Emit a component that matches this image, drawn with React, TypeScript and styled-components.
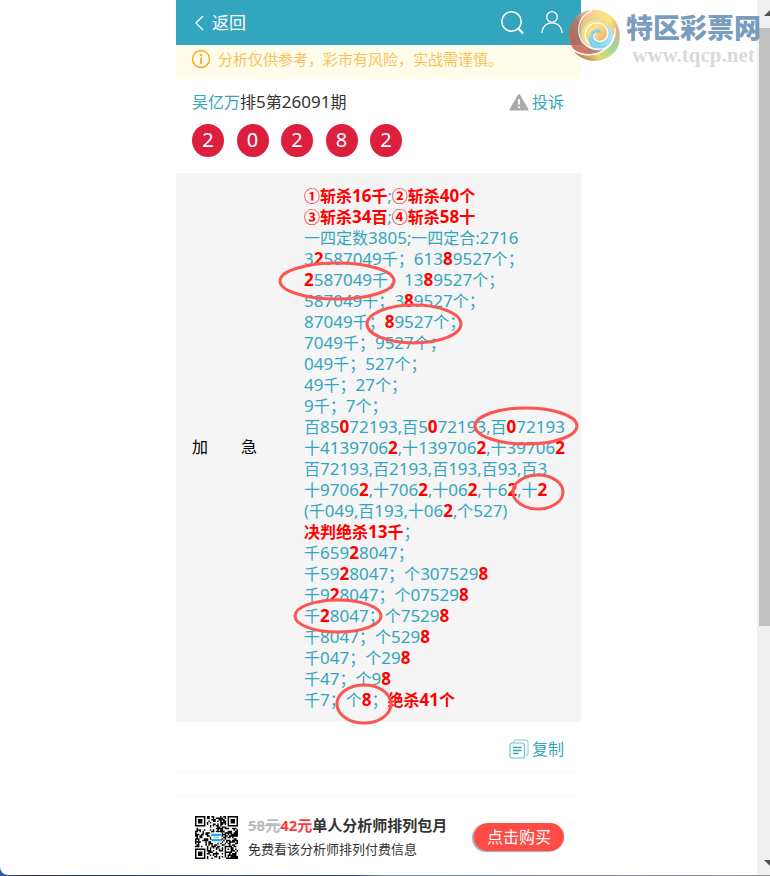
import React from "react";
import styled, { createGlobalStyle, css } from "styled-components";

const teal = "#34a5be";
const sans = `"Noto Sans", "Noto Sans CJK SC", sans-serif`;

const GlobalStyle = createGlobalStyle`
  * { box-sizing: border-box; }
  body { margin: 0; background: #2c5fb0; font-family: ${sans}; color: #333; }
  h1, h2, p { margin: 0; font-weight: 400; }
  a { text-decoration: none; color: inherit; }
  button { font-family: inherit; border: 0; padding: 0; background: none; color: inherit; cursor: pointer; }
  svg { display: block; flex: none; }
`;

const Window = styled.div`
  position: relative;
  display: flex;
  flex-direction: column;
  min-height: 100vh;
  background: linear-gradient(90deg, #2a5bb0 0, #2f2f3c 3%, #2c4a86 24%, #2f5596 30%, #4a3f58 34%, #2c4a86 46%, #7d8790 50%, #8b929a 100%);
`;
const Viewport = styled.div`
  display: flex;
  flex: 1;
  margin-bottom: 1px;
  background: #fff;
  border-bottom-left-radius: 8px;
  overflow: hidden;
`;
const Main = styled.main`
  flex: 1;
  min-width: 0;
`;
const Column = styled.div`
  max-width: 405px;
  margin: 0 auto;
`;

const Header = styled.header`
  display: flex;
  align-items: center;
  justify-content: space-between;
  height: 45px;
  padding: 0 18px;
  background: ${teal};
  color: #fff;
`;
const BackLink = styled.a`
  display: flex;
  align-items: center;
  gap: 8px;
  font-size: 17px;
  line-height: 24px;
`;
const HeaderActions = styled.div`
  display: flex;
  align-items: center;
  gap: 17px;
`;
const Notice = styled.p`
  display: flex;
  gap: 7px;
  height: 34px;
  padding: 4px 15px;
  background: #fffde9;
  border-radius: 0 0 3px 3px;
  color: #f7c15d;
  font-size: 15px;
  line-height: 20px;
  white-space: nowrap;
`;

const Summary = styled.section`
  padding: 11px 17px 16px 16px;
`;
const SummaryTop = styled.div`
  display: flex;
  align-items: center;
  justify-content: space-between;
`;
const Title = styled.h1`
  font-size: 16px;
  line-height: 24px;
`;
const Author = styled.a`
  color: ${teal};
`;
const Numerals = styled.span`
  font-size: 17px;
`;
const IconAction = styled.button`
  display: flex;
  align-items: center;
  gap: 3px;
  color: ${teal};
  font-size: 16px;
  line-height: 24px;
`;
const Balls = styled.div`
  display: flex;
  justify-content: space-between;
  max-width: 210px;
  margin-top: 10px;
`;
const Ball = styled.span`
  width: 32px;
  height: 33px;
  border-radius: 50%;
  background: #dc1f3e;
  color: #fff;
  font-size: 20px;
  line-height: 32px;
  text-align: center;
`;

const Panel = styled.section`
  position: relative;
  display: flex;
  align-items: center;
  padding: 12px 0 12px 16px;
  background: #f5f5f5;
`;
const PanelLabel = styled.h2`
  display: flex;
  justify-content: space-between;
  flex: 0 0 65px;
  margin-right: 47px;
  color: #000;
  font-size: 16px;
  line-height: 21px;
`;
const Line = styled.p`
  height: 21px;
  color: ${teal};
  font-size: 16px;
  line-height: 21px;
  white-space: nowrap;
`;
const Hit = styled.strong`
  color: #f00;
  font-weight: 700;
`;
const Marks = styled.svg`
  position: absolute;
  inset: 0;
  width: 100%;
  height: 100%;
  overflow: visible;
  pointer-events: none;
`;

const CopyRow = styled.div`
  display: flex;
  justify-content: flex-end;
  padding: 15px 17px 10px;
  border-bottom: 1px solid #fafafa;
`;
const Promo = styled.section`
  display: flex;
  align-items: center;
  margin-top: 24px;
  padding: 17px 17px 12px 19px;
  border-top: 1px solid #fafafa;
`;
const PromoText = styled.div`
  flex: 1;
  margin-left: 10px;
  white-space: nowrap;
`;
const PromoTitle = styled.h2`
  color: #333;
  font-size: 15px;
  font-weight: 700;
  line-height: 22px;
`;
const Price = styled.span<{ $old?: boolean }>`
  ${(p) =>
    p.$old
      ? css`
          color: #bbb;
          text-decoration: line-through;
        `
      : css`
          color: #ff3b3b;
        `}
`;
const PromoNote = styled.p`
  margin-top: 2px;
  font-size: 13px;
  line-height: 22px;
`;
const BuyButton = styled.button`
  && {
    height: 28px;
    padding: 0 13px;
    border-radius: 14px;
    background: #ff4c46;
    box-shadow: -2px 1px 1px #aaa;
    color: #fff;
    font-size: 16px;
    line-height: 28px;
  }
`;

const Scrollbar = styled.div`
  display: flex;
  flex-direction: column;
  flex: 0 0 13px;
  padding-left: 2px;
  overflow: hidden;
  background: #f0f0f0;
`;
const ArrowBox = styled.div<{ $end?: boolean }>`
  display: flex;
  align-items: ${(p) => (p.$end ? "center" : "flex-start")};
  justify-content: flex-end;
  height: ${(p) => (p.$end ? "24px" : "28px")};
  padding-top: ${(p) => (p.$end ? "0" : "10px")};
`;
const Thumb = styled.div`
  flex: 598;
  background: #c1c1c1;
`;
const Track = styled.div`
  flex: 225;
`;

const Watermark = styled.div`
  position: absolute;
  top: 9px;
  right: 9px;
  display: flex;
  gap: 6px;
  pointer-events: none;
`;
const WatermarkText = styled.div`
  display: flex;
  flex-direction: column;
  align-items: center;
`;
const WatermarkName = styled.span`
  color: rgba(78, 125, 170, 0.75);
  font-family: "Noto Sans CJK SC", sans-serif;
  font-size: 27px;
  font-weight: 900;
  line-height: 36px;
`;
const WatermarkUrl = styled.span`
  color: rgba(170, 170, 170, 0.45);
  font-family: "Liberation Serif", serif;
  font-size: 21px;
  font-weight: 700;
  line-height: 20px;
`;

/* Prediction lines; text between asterisks is highlighted. */
const lines = [
  "*①斩杀16千*;*②斩杀40个*",
  "*③斩杀34百*;*④斩杀58十*",
  "一四定数3805;一四定合:2716",
  "3*2*587049千；613*8*9527个；",
  "*2*587049千；13*8*9527个；",
  "587049千；3*8*9527个；",
  "87049千；*8*9527个；",
  "7049千；9527个；",
  "049千；527个；",
  "49千；27个；",
  "9千；7个；",
  "百85*0*72193,百5*0*72193,百*0*72193",
  "十4139706*2*,十139706*2*,十39706*2*",
  "百72193,百2193,百193,百93,百3",
  "十9706*2*,十706*2*,十06*2*,十6*2*,十*2*",
  "(千049,百193,十06*2*,个527)",
  "*决判绝杀13千*；",
  "千659*2*8047；",
  "千59*2*8047；个307529*8*",
  "千9*2*8047；个07529*8*",
  "千*2*8047；个7529*8*",
  "千8047；个529*8*",
  "千047；个29*8*",
  "千47；个9*8*",
  "千7；个*8*；*绝杀41个*",
];

const marks = [
  [161, 108, 57, 18],
  [238, 151, 47, 19],
  [350, 253, 51, 18],
  [362, 319, 25, 17],
  [162, 443, 43, 16],
  [188, 531, 27, 19],
];

function Mixed({ text }: { text: string }) {
  return (
    <>
      {text.split(/(\d+)/).map((part, i) => (i % 2 ? <Numerals key={i}>{part}</Numerals> : part))}
    </>
  );
}

function QrCode() {
  const n = 29;
  const cells: string[] = [];
  const finder = (x: number, y: number) => {
    const d = Math.max(Math.abs(x - 3), Math.abs(y - 3));
    return d === 3 || d <= 1;
  };
  let seed = 91;
  for (let y = 0; y < n; y++) {
    for (let x = 0; x < n; x++) {
      seed = (seed * 1103515245 + 12345) % 2147483648;
      let on = (seed >> 12) % 100 < 52;
      if (x < 8 && y < 8) on = x < 7 && y < 7 && finder(x, y);
      else if (x > 20 && y < 8) on = x > 21 && y < 7 && finder(x - 22, y);
      else if (x < 8 && y > 20) on = x < 7 && y > 21 && finder(x, y - 22);
      else if (x > 19 && x < 25 && y > 19 && y < 25) {
        on = Math.max(Math.abs(x - 22), Math.abs(y - 22)) !== 1;
      }
      if (on) cells.push(`M${x} ${y}h1v1h-1z`);
    }
  }
  return (
    <svg width="43" height="43" viewBox="0 0 29 29" role="img" aria-label="二维码">
      <path d={cells.join("")} fill="#000" />
      <rect x="11" y="11" width="7" height="7" fill="#fff" />
      <path d="M11 12h7v1.5h-7z" fill="#2aa7e8" />
      <path d="M12.5 13.8h4l-1 1.2h-3z" fill="#8ed2f5" />
      <path d="M11 15.5h7V17h-7z" fill="#2aa7e8" />
    </svg>
  );
}

function SwirlLogo() {
  return (
    <svg width="52" height="53" viewBox="9 8 156 158" opacity="0.85" aria-hidden="true">
      <defs>
        <linearGradient id="warm" x1="0" y1="0.3" x2="1" y2="0.6">
          <stop offset="0" stopColor="#e58a5c" />
          <stop offset="0.4" stopColor="#f9cf7c" />
          <stop offset="0.7" stopColor="#fbe36a" />
          <stop offset="1" stopColor="#d98a62" />
        </linearGradient>
        <linearGradient id="ember" x1="0.8" y1="0" x2="0.3" y2="1">
          <stop offset="0" stopColor="#fbd9b4" />
          <stop offset="0.45" stopColor="#b9755c" />
          <stop offset="1" stopColor="#c85d4c" />
        </linearGradient>
        <linearGradient id="lagoon" x1="0" y1="0.2" x2="1" y2="0.3">
          <stop offset="0" stopColor="#7fcbd0" />
          <stop offset="0.6" stopColor="#6ec9e6" />
          <stop offset="1" stopColor="#a6e0ee" />
        </linearGradient>
        <linearGradient id="meadow" x1="0" y1="0.8" x2="1" y2="0">
          <stop offset="0" stopColor="#b5563c" />
          <stop offset="0.3" stopColor="#dcd75a" />
          <stop offset="0.6" stopColor="#8fd08c" />
          <stop offset="1" stopColor="#e09a6c" />
        </linearGradient>
        <linearGradient id="core" x1="0" y1="0" x2="1" y2="1">
          <stop offset="0" stopColor="#fff07a" />
          <stop offset="1" stopColor="#f5a04c" />
        </linearGradient>
      </defs>
      <circle cx="88" cy="86" r="76" fill="url(#warm)" />
      <path d="M88 10C42 10 10 44 12 88c1 22 12 42 28 52 26 8 58 4 78-14-38 8-72-12-74-46-2-30 16-56 44-70z" fill="url(#ember)" />
      <path d="M26 132c34 22 76 18 104-8 18-18 24-40 20-62 12 12 16 34 12 50-10 36-50 58-92 49-18-4-34-14-44-29z" fill="url(#meadow)" />
      <path d="M50 92c-6-32 18-58 48-56 32 2 50 28 46 56-6 32-36 46-60 38-18-6-31-20-34-38z" fill="url(#lagoon)" />
      <path d="M50 82c2-26 22-46 48-46 26 1 42 18 46 38-12-18-30-24-48-18-18 5-28 22-26 40 0 14 8 24 16 30-20-4-36-22-36-44z" fill="#f6d774" />
      <path d="M70 84c0-18 14-32 32-30 16 1 26 12 25 26-1 16-15 25-27 21-11-3-14-15-7-21 5-5 13-3 14 3 4-10-5-17-15-14-10 2-18 12-14 25-5-2-8-6-8-10z" fill="url(#core)" />
      <g fill="none" stroke="#fff" strokeWidth="4" strokeLinecap="round">
        <path d="M80 13C52 26 38 50 42 80c4 32 32 50 64 48 22-1 38-18 40-40" />
        <path d="M72 112C54 94 58 66 78 54c22-12 50 0 50 26 0 18-16 28-30 24-12-4-15-16-7-23" />
        <path d="M24 130c34 22 72 18 100-4 18-14 28-36 26-60" />
      </g>
    </svg>
  );
}

export default function App() {
  return (
    <Window>
      <GlobalStyle />
      <Viewport>
        <Main>
          <Column>
            <Header>
              <BackLink href="#back">
                <svg width="10" height="18" viewBox="0 0 10 18" fill="none" stroke="#fff" strokeWidth="1.3">
                  <path d="M9 2 2 9l7 7" />
                </svg>
                返回
              </BackLink>
              <HeaderActions>
                <button aria-label="搜索">
                  <svg width="24" height="24" viewBox="0 0 24 24" fill="none" stroke="#fff" strokeWidth="1.5">
                    <circle cx="11.5" cy="10.5" r="9.7" />
                    <path d="m18.5 17.5 4.5 5" strokeWidth="2" />
                  </svg>
                </button>
                <button aria-label="我的">
                  <svg width="22" height="24" viewBox="0 0 22 24" fill="none" stroke="#fff" strokeWidth="1.2">
                    <circle cx="11" cy="6" r="5.3" />
                    <path d="M1 22c0-6 4.3-10.200 10-10.200S21 16 21 22" />
                  </svg>
                </button>
              </HeaderActions>
            </Header>
            <Notice>
              <svg width="20" height="20" viewBox="0 0 20 20" fill="none" stroke="#ffa11a" strokeWidth="1.4">
                <circle cx="10" cy="10" r="8.5" />
                <path d="M10 8.5V15M10 5v2" strokeWidth="1.7" />
              </svg>
              分析仅供参考，彩市有风险，实战需谨慎。
            </Notice>
            <Summary>
              <SummaryTop>
                <Title>
                  <Author href="#author">吴亿万</Author>
                  <Mixed text="排5第26091期" />
                </Title>
                <IconAction>
                  <svg width="20" height="18" viewBox="0 0 20 18">
                    <path d="M10 2 18.500 16.500h-17z" fill="#aaa" stroke="#aaa" strokeWidth="2" strokeLinejoin="round" />
                    <path d="M10 6v5.500M10 13.200v2" stroke="#fff" strokeWidth="1.8" />
                  </svg>
                  投诉
                </IconAction>
              </SummaryTop>
              <Balls>
                {["2", "0", "2", "8", "2"].map((n, i) => (
                  <Ball key={i}>{n}</Ball>
                ))}
              </Balls>
            </Summary>
            <Panel>
              <PanelLabel>
                <span>加</span>
                <span>急</span>
              </PanelLabel>
              <div>
                {lines.map((line) => (
                  <Line key={line}>
                    {line.split("*").map((part, i) =>
                      i % 2 ? (
                        <Hit key={i}>
                          <Mixed text={part} />
                        </Hit>
                      ) : (
                        <Mixed key={i} text={part} />
                      ),
                    )}
                  </Line>
                ))}
              </div>
              <Marks aria-hidden="true">
                {marks.map(([cx, cy, rx, ry]) => (
                  <ellipse key={cy} cx={cx} cy={cy} rx={rx} ry={ry} fill="none" stroke="#fc5552" strokeWidth="3" />
                ))}
              </Marks>
            </Panel>
            <CopyRow>
              <IconAction>
                <svg width="20" height="20" viewBox="0 0 20 20" fill="none" stroke={teal}>
                  <path d="M4.500 3.500V3q0-2 2-2H17q2 0 2 2v12q0 1.500-2 1.500" strokeOpacity="0.6" />
                  <rect x="1" y="4" width="14.5" height="15" rx="2" strokeOpacity="0.7" strokeWidth="1.2" />
                  <path d="M4 8.500h8.500M4 11.500h8.500M4 14.500h5.500" strokeWidth="1.3" />
                </svg>
                复制
              </IconAction>
            </CopyRow>
            <Promo>
              <QrCode />
              <PromoText>
                <PromoTitle>
                  <Price as="s" $old>
                    58元
                  </Price>
                  <Price>42元</Price>单人分析师排列包月
                </PromoTitle>
                <PromoNote>免费看该分析师排列付费信息</PromoNote>
              </PromoText>
              <BuyButton>点击购买</BuyButton>
            </Promo>
          </Column>
        </Main>
        <Scrollbar aria-hidden="true">
          <ArrowBox>
            <svg width="6" height="6" viewBox="0 0 6 6">
              <path d="M6 0v6H0z" fill="#505050" />
            </svg>
          </ArrowBox>
          <Thumb />
          <Track />
          <ArrowBox $end>
            <svg width="6" height="6" viewBox="0 0 6 6">
              <path d="M0 0h6v6z" fill="#505050" />
            </svg>
          </ArrowBox>
        </Scrollbar>
      </Viewport>
      <Watermark>
        <SwirlLogo />
        <WatermarkText>
          <WatermarkName>特区彩票网</WatermarkName>
          <WatermarkUrl>www.tqcp.net</WatermarkUrl>
        </WatermarkText>
      </Watermark>
    </Window>
  );
}
